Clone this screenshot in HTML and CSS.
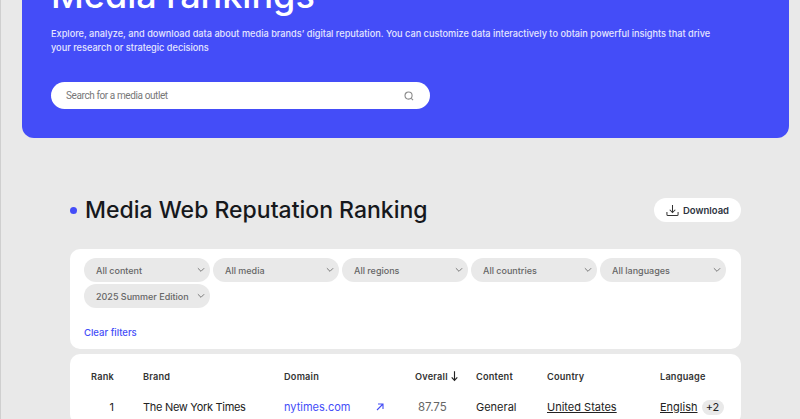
FILE: index.html
```html
<!DOCTYPE html>
<html lang="en">
<head>
  <meta charset="UTF-8">
  <title>Media rankings</title>
  <link rel="stylesheet" href="styles.css">
</head>
<body>

  <!-- hero -->
  <header class="hero">
    <h1>Media rankings</h1>
    <p>Explore, analyze, and download data about media brands’ digital reputation. You can customize data interactively to obtain powerful insights that drive your research or strategic decisions</p>
    <div class="search">
      <span>Search for a media outlet</span>
      <svg width="10" height="10" viewBox="0 0 11 11" fill="none" stroke="#8a8a8a" stroke-width="1.2"><circle cx="5" cy="5" r="3.9"/><path d="M8 8l2 2"/></svg>
    </div>
  </header>

  <main class="content">
    <div class="title-row">
      <h2><span class="dot"></span>Media Web Reputation Ranking</h2>
      <button class="download">
        <svg width="13" height="13" viewBox="0 0 14 14" fill="none" stroke="#333" stroke-width="1.1"><path d="M7 1v8M4 6.2L7 9.2l3-3M1 8.5v2.7c0 .8.4 1.3 1.2 1.3h9.6c.8 0 1.2-.5 1.2-1.3V8.5"/></svg>
        Download
      </button>
    </div>

    <!-- filters -->
    <section class="card filters">
      <div class="filter-list">
        <div class="filter">All content<svg class="chev" width="8" height="6" viewBox="0 0 9 6" fill="none" stroke="#777" stroke-width="1.1"><path d="M1 1l3.5 3.5L8 1"/></svg></div>
        <div class="filter">All media<svg class="chev" width="8" height="6" viewBox="0 0 9 6" fill="none" stroke="#777" stroke-width="1.1"><path d="M1 1l3.5 3.5L8 1"/></svg></div>
        <div class="filter">All regions<svg class="chev" width="8" height="6" viewBox="0 0 9 6" fill="none" stroke="#777" stroke-width="1.1"><path d="M1 1l3.5 3.5L8 1"/></svg></div>
        <div class="filter">All countries<svg class="chev" width="8" height="6" viewBox="0 0 9 6" fill="none" stroke="#777" stroke-width="1.1"><path d="M1 1l3.5 3.5L8 1"/></svg></div>
        <div class="filter">All languages<svg class="chev" width="8" height="6" viewBox="0 0 9 6" fill="none" stroke="#777" stroke-width="1.1"><path d="M1 1l3.5 3.5L8 1"/></svg></div>
        <div class="filter">2025 Summer Edition<svg class="chev" width="8" height="6" viewBox="0 0 9 6" fill="none" stroke="#777" stroke-width="1.1"><path d="M1 1l3.5 3.5L8 1"/></svg></div>
      </div>
      <a class="clear" href="#">Clear filters</a>
    </section>

    <!-- table -->
    <section class="card results">
      <div class="row head">
        <div class="c-rank">Rank</div>
        <div class="c-brand">Brand</div>
        <div class="c-domain">Domain</div>
        <div class="c-overall">Overall <svg width="7" height="12" viewBox="0 0 8 12" fill="none" stroke="#222" stroke-width="1.3"><path d="M4 0.5v10.5M0.8 7.6L4 11l3.2-3.4"/></svg></div>
        <div class="c-content">Content</div>
        <div class="c-country">Country</div>
        <div class="c-language">Language</div>
      </div>
      <div class="row body">
        <div class="c-rank">1</div>
        <div class="c-brand">The New York Times</div>
        <div class="c-domain"><a href="#">nytimes.com</a><svg width="8" height="8" viewBox="0 0 8 8" fill="none" stroke="#444df5" stroke-width="1.1"><path d="M1 7l6-6M2 1h5v5"/></svg></div>
        <div class="c-overall score">87.75</div>
        <div class="c-content">General</div>
        <div class="c-country"><a href="#">United States</a></div>
        <div class="c-language"><a href="#">English</a><span class="more">+2</span></div>
      </div>
    </section>
  </main>

</body>
</html>
```

FILE: styles.css
```css
html, body {
  height: 419px;
  overflow: hidden;
}
body {
  margin: 0;
  background-color: #e9e9e9;
  border-left: 1px solid #cfcfcf;
  color: #1c1c1c;
  font-family: "Inter", "Liberation Sans", sans-serif;
}
a {
  color: inherit;
}

.hero {
  box-sizing: border-box;
  height: 138px;
  margin: 0 11px 0 21px;
  padding: 0 29px 0 29px;
  background-color: #444df8;
  border-radius: 0 0 12px 12px;
  color: #fff;
  overflow: hidden;
}
.hero h1 {
  margin: -28px 0 0;
  font-size: 36px;
  line-height: 46px;
  font-weight: 500;
}
.hero p {
  margin: 9px 0 0;
  width: 670px;
  font-size: 9.2px;
  line-height: 14px;
  font-weight: 500;
  color: #e4e6ff;
}
.search {
  display: flex;
  justify-content: space-between;
  align-items: center;
  box-sizing: border-box;
  width: 379px;
  height: 27px;
  margin-top: 27px;
  padding: 0 16px 0 15px;
  background-color: #fff;
  border-radius: 14px;
  font-family: "Roboto", sans-serif;
  font-size: 10px;
  letter-spacing: -0.4px;
  color: #777;
}

.content {
  margin: 0 59px 0 69px;
}
.title-row {
  display: flex;
  justify-content: space-between;
  align-items: center;
  margin-top: 58px;
  height: 28px;
}
.title-row h2 {
  display: flex;
  align-items: center;
  margin: 0;
  font-size: 23px;
  font-weight: 500;
  color: #16181c;
}
.dot {
  width: 7px;
  height: 7px;
  margin-right: 8px;
  border-radius: 50%;
  background-color: #444df8;
}
.download {
  display: flex;
  align-items: center;
  gap: 4px;
  height: 24px;
  width: 87px;
  padding: 0 0 0 12px;
  border: 0;
  border-radius: 12px;
  background-color: #fff;
  font-family: inherit;
  font-size: 9.5px;
  font-weight: 600;
  color: #2d3340;
}

.card {
  background-color: #fff;
  border-radius: 10px;
}
.filters {
  margin-top: 25px;
  height: 100px;
  box-sizing: border-box;
  padding: 9px 14px 0;
}
.filter-list {
  display: flex;
  flex-wrap: wrap;
  gap: 2px 3px;
}
.filter {
  display: flex;
  justify-content: space-between;
  align-items: center;
  box-sizing: border-box;
  width: 126px;
  height: 24px;
  padding: 0 5px 0 12px;
  border-radius: 12px;
  background-color: #e9e9e9;
  font-size: 9px;
  font-weight: 500;
  color: #666;
}
.clear {
  display: block;
  margin-top: 19px;
  font-size: 9.5px;
  font-weight: 500;
  color: #444df8;
  text-decoration: none;
}

.results {
  margin-top: 5px;
  height: 70px;
  padding-top: 16px;
  box-sizing: border-box;
}
.row {
  display: flex;
  align-items: center;
}
.head {
  font-size: 9.2px;
  font-weight: 600;
  letter-spacing: 0.2px;
  color: #333;
  height: 12px;
}
.body {
  margin-top: 15px;
  font-size: 11px;
  height: 20px;
  color: #222;
}
.c-rank { width: 44px; text-align: right; flex: none; }
.c-brand { width: 141px; margin-left: 29px; flex: none; }
.body .c-brand { letter-spacing: -0.3px; }
.c-domain { width: 100px; flex: none; display: flex; align-items: center; justify-content: space-between; }
.c-domain a { color: #444df8; text-decoration: none; }
.c-overall { width: 61px; margin-left: 31px; flex: none; display: flex; align-items: center; gap: 3px; }
.score { color: #666; padding-left: 3px; box-sizing: border-box; font-size: 11.5px; }
.c-content { width: 71px; flex: none; }
.c-country { width: 113px; flex: none; }
.c-language { flex: none; display: flex; align-items: center; gap: 4px; }
.more {
  width: 22px;
  height: 15px;
  line-height: 15px;
  text-align: center;
  border-radius: 8px;
  background-color: #e9e9e9;
}
```
